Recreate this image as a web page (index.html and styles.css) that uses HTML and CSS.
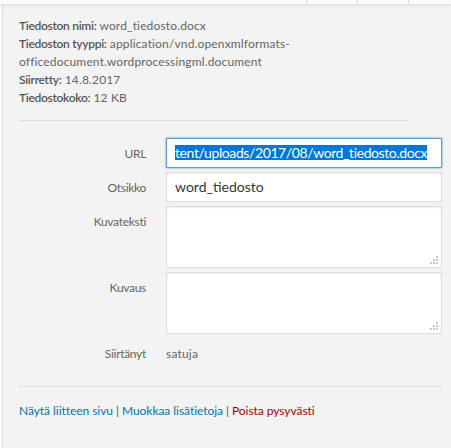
FILE: index.html
```html
<!DOCTYPE html>
<html lang="fi">
<head>
<meta charset="utf-8">
<title>Liitteen tiedot</title>
<link rel="stylesheet" href="styles.css">
</head>
<body>
<div class="page">
  <div class="topbar">
    <div class="cell cell-wide"></div>
    <div class="cell"></div>
    <div class="cell"></div>
    <div class="cell cell-last"></div>
  </div>
  <div class="main">
    <div class="edge"></div>
    <div class="sidebar">
      <div class="details">
        <div><strong>Tiedoston nimi:</strong> word_tiedosto.docx</div>
        <div><strong>Tiedoston tyyppi:</strong> application/vnd.openxmlformats-<br>officedocument.wordprocessingml.document</div>
        <div><strong>Siirretty:</strong> 14.8.2017</div>
        <div><strong>Tiedostokoko:</strong> 12 KB</div>
      </div>
      <div class="settings">
        <label class="label">URL</label>
        <div class="input focus"><div class="clip"><span class="sel">tent/uploads/2017/08/word_tiedosto.docx</span></div></div>
        <label class="label">Otsikko</label>
        <div class="input"><div class="clip">word_tiedosto</div></div>
        <label class="label">Kuvateksti</label>
        <div class="textarea"><span class="grip"></span></div>
        <label class="label">Kuvaus</label>
        <div class="textarea"><span class="grip"></span></div>
        <span class="label plain">Siirtänyt</span>
        <span class="value">satuja</span>
      </div>
      <div class="actions">
        <a class="link">Näytä liitteen sivu</a> <span class="sep">|</span> <a class="link">Muokkaa lisätietoja</a> <span class="sep">|</span> <a class="link delete">Poista pysyvästi</a>
      </div>
    </div>
  </div>
</div>
</body>
</html>
```

FILE: styles.css
```css
*, *::before, *::after {
  box-sizing: border-box;
}
html, body {
  margin: 0;
  padding: 0;
  height: 100%;
}
body {
  background: #f3f3f3;
  font-family: Lato, "Open Sans", sans-serif;
  color: #666;
  font-size: 12px;
  line-height: 18px;
  overflow: hidden;
}
.page {
  display: flex;
  flex-direction: column;
  height: 448px;
}
.topbar {
  display: flex;
  height: 5px;
  background: #fbfbfb;
  border-bottom: 1px solid #e1e1e1;
  box-shadow: 0 1px 5px rgba(0,0,0,0.06);
  position: relative;
  z-index: 1;
}
.cell {
  width: 51px;
  border-left: 1px solid #dcdcdc;
}
.cell-wide {
  width: 306px;
  border-left: none;
}
.cell-last {
  flex: 1;
}
.main {
  display: flex;
  flex: 1;
}
.edge {
  width: 3px;
  background: #fbfbfb;
  border-right: 1px solid #dddddd;
}
.sidebar {
  flex: 1;
  min-width: 0;
  padding: 12px 8px 0 16px;
}
.details {
  width: 389px;
  padding-bottom: 13px;
  border-bottom: 1px solid #dddddd;
  letter-spacing: 0.15px;
}
.details strong {
  font-weight: 600;
  color: #555;
  letter-spacing: -0.3px;
}
.settings {
  display: grid;
  grid-template-columns: 127px minmax(0, 1fr);
  column-gap: 20px;
  row-gap: 4px;
  padding-top: 17px;
  padding-right: 1px;
}
.label {
  text-align: right;
  padding-top: 7px;
  color: #666;
  letter-spacing: -0.3px;
}
.value {
  padding-top: 7px;
  color: #666;
  letter-spacing: 0.2px;
}
.input {
  min-width: 0;
  height: 30px;
  border: 1px solid #dddddd;
  box-shadow: inset 0 1px 2px rgba(0,0,0,0.07);
  background: #fff;
  padding: 0 8px;
  display: flex;
  align-items: center;
  font-size: 14px;
  color: #32373c;
}
.input.focus {
  border-color: #5b9dd9;
  box-shadow: 0 0 2px rgba(30,140,190,0.8);
}
.clip {
  flex: 1;
  min-width: 0;
  overflow: hidden;
  white-space: nowrap;
  line-height: 18px;
}
.sel {
  display: inline-block;
  line-height: 15px;
  background: #0078d7;
  color: #fff;
  letter-spacing: -0.4px;
}
.textarea {
  height: 62px;
  border: 1px solid #dddddd;
  box-shadow: inset 0 1px 2px rgba(0,0,0,0.07);
  background: #fff;
  display: flex;
  justify-content: flex-end;
  align-items: flex-end;
  padding: 0 3px 3px 0;
}
.grip {
  width: 8px;
  height: 8px;
  background:
    linear-gradient(#c8c8c8, #c8c8c8) 6px 0 / 2px 2px no-repeat,
    linear-gradient(#c8c8c8, #c8c8c8) 3px 3px / 2px 2px no-repeat,
    linear-gradient(#c8c8c8, #c8c8c8) 6px 3px / 2px 2px no-repeat,
    linear-gradient(#c8c8c8, #c8c8c8) 0 6px / 2px 2px no-repeat,
    linear-gradient(#c8c8c8, #c8c8c8) 3px 6px / 2px 2px no-repeat,
    linear-gradient(#c8c8c8, #c8c8c8) 6px 6px / 2px 2px no-repeat;
}
.actions {
  margin-top: 23px;
  border-top: 1px solid #dddddd;
  padding-top: 15px;
  font-size: 12px;
  letter-spacing: -0.05px;
  color: #555;
}
.link {
  color: #0073aa;
}
.link.delete {
  color: #a00;
}
.sep {
  color: #555;
}
```
